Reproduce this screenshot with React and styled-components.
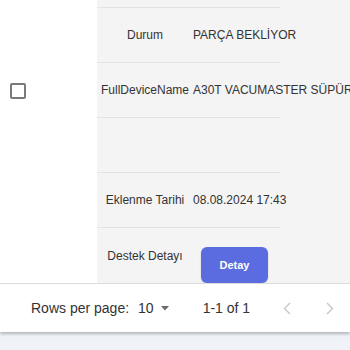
import styled, { createGlobalStyle } from "styled-components";

const Global = createGlobalStyle`
  html, body {
    margin: 0;
    padding: 0;
    background: #eff2f7;
    font-family: "Liberation Sans", Arial, sans-serif;
  }
`;

const Page = styled.div`
  width: 350px;
  height: 350px;
  overflow: hidden;
  display: flex;
  flex-direction: column;
`;

const Card = styled.div`
  background: #fff;
  box-shadow: 0 2px 3px rgba(0, 0, 0, 0.25);
`;

const Body = styled.div`
  display: flex;
  height: 283px;
  overflow: hidden;
`;

const CheckCol = styled.div`
  width: 97px;
  flex-shrink: 0;
  padding: 83px 0 0 10px;
  box-sizing: border-box;
  background: #fff;
`;

const Checkbox = styled.div`
  width: 16px;
  height: 16px;
  box-sizing: border-box;
  border: 2px solid #7a7a7a;
  border-radius: 2px;
`;

const Panel = styled.div`
  flex: 1;
  min-width: 0;
  background: #f4f4f4;
  display: flex;
  flex-direction: column;
`;

const Row = styled.div`
  width: 183px;
  height: ${(p) => p.$h}px;
  flex-shrink: 0;
  display: flex;
  align-items: center;
  box-sizing: border-box;
  border-bottom: ${(p) => (p.$last ? "none" : "1px solid #e3e3e3")};
  font-size: 12px;
  color: #333;
  white-space: nowrap;
`;

const Label = styled.div`
  width: 96px;
  flex-shrink: 0;
  display: flex;
  justify-content: center;
`;

const Value = styled.div`
  flex-shrink: 0;
`;

const DetailButton = styled.button`
  margin: 18px 0 0 8px;
  width: 67px;
  height: 36px;
  border: none;
  border-radius: 6px;
  background: #5a6ce0;
  color: #fff;
  font-family: "Liberation Sans", Arial, sans-serif;
  font-weight: bold;
  font-size: 11px;
  box-shadow: 0 1px 2px rgba(0, 0, 0, 0.15);
`;

const Pagination = styled.div`
  height: 49px;
  border-top: 1px solid #dcdcdc;
  box-sizing: border-box;
  display: flex;
  align-items: center;
  padding-left: 31px;
  font-size: 14px;
  color: #333;
  white-space: nowrap;
  overflow: hidden;

  & > * {
    flex-shrink: 0;
  }
`;

const Select = styled.div`
  display: flex;
  align-items: center;
  margin-left: 9px;
  gap: 7px;
`;

const Displayed = styled.div`
  margin-left: 34px;
`;

const NavButton = styled.div`
  width: 43px;
  display: flex;
  justify-content: center;
  margin-left: ${(p) => p.$ml || 0}px;
`;

const Caret = () => (
  <svg width="8" height="5" viewBox="0 0 8 5">
    <polygon points="0,0 8,0 4,4.5" fill="#6b6b6b" />
  </svg>
);

const Chevron = ({ dir }) => (
  <svg width="8" height="13" viewBox="0 0 8 13">
    <polyline
      points={dir === "left" ? "7,1 1.5,6.5 7,12" : "1,1 6.5,6.5 1,12"}
      fill="none"
      stroke="#c6c6c6"
      strokeWidth="1.4"
    />
  </svg>
);

export default function App() {
  return (
    <Page>
      <Global />
      <Card>
        <Body>
          <CheckCol>
            <Checkbox />
          </CheckCol>
          <Panel>
            <Row $h={8} />
            <Row $h={55}>
              <Label>Durum</Label>
              <Value>PARÇA BEKLİYOR</Value>
            </Row>
            <Row $h={55}>
              <Label>FullDeviceName</Label>
              <Value>A30T VACUMASTER SÜPÜRGE</Value>
            </Row>
            <Row $h={55} />
            <Row $h={55}>
              <Label>Eklenme Tarihi</Label>
              <Value>08.08.2024 17:43</Value>
            </Row>
            <Row $h={55} $last>
              <Label>Destek Detayı</Label>
              <DetailButton>Detay</DetailButton>
            </Row>
          </Panel>
        </Body>
        <Pagination>
          <span>Rows per page:</span>
          <Select>
            <span>10</span>
            <Caret />
          </Select>
          <Displayed>1-1 of 1</Displayed>
          <NavButton $ml={15}>
            <Chevron dir="left" />
          </NavButton>
          <NavButton>
            <Chevron dir="right" />
          </NavButton>
        </Pagination>
      </Card>
    </Page>
  );
}
